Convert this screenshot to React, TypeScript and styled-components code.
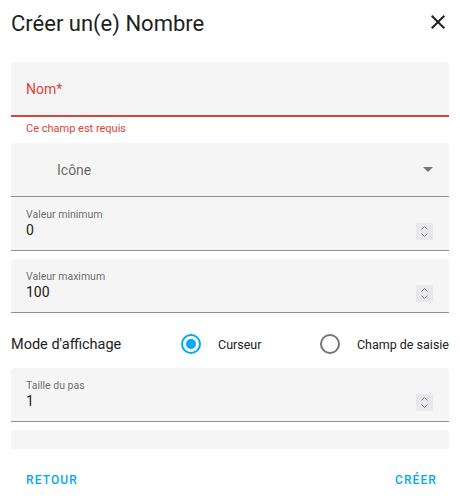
import styled, { createGlobalStyle } from 'styled-components';

const GlobalStyle = createGlobalStyle`
  body {
    margin: 0;
    background: #fff;
    font-family: Roboto, 'Noto Sans', sans-serif;
    -webkit-font-smoothing: antialiased;
  }
`;

const Dialog = styled.div`
  width: 460px;
  height: 500px;
  display: flex;
  flex-direction: column;
  background: #fff;
  overflow: hidden;
`;

const Header = styled.header`
  height: 62px;
  box-sizing: border-box;
  padding: 11px 10px 0 11px;
  display: flex;
  justify-content: space-between;
  align-items: flex-start;
  flex-shrink: 0;
`;

const Title = styled.h2`
  margin: 0;
  font-size: 22px;
  line-height: 26px;
  font-weight: 400;
  color: #212121;
`;

const CloseButton = styled.button`
  width: 24px;
  height: 24px;
  margin-top: -1px;
  padding: 0;
  border: 0;
  background: none;
  color: #212121;
  cursor: pointer;
`;

const Content = styled.div`
  flex: 1;
  overflow: hidden;
  padding: 0 11px;
  display: flex;
  flex-direction: column;
`;

const Field = styled.div<{ $error?: boolean; $gap?: number }>`
  flex-shrink: 0;
  box-sizing: border-box;
  height: ${(p) => (p.$error ? 55 : 54)}px;
  margin-bottom: ${(p) => p.$gap ?? 0}px;
  padding: 0 16px 0 15px;
  background: #f5f5f5;
  border-radius: 4px 4px 0 0;
  border-bottom: ${(p) =>
    p.$error ? '2px solid #db4437' : '1px solid rgba(0, 0, 0, 0.42)'};
  display: flex;
  align-items: center;
`;

const NumberField = styled(Field)`
  flex-direction: column;
  align-items: stretch;
`;

const ErrorLabel = styled.span`
  font-size: 14px;
  color: #db4437;
`;

const HelperText = styled.div`
  flex-shrink: 0;
  padding: 4px 15px 6px;
  font-size: 11px;
  line-height: 16px;
  color: #db4437;
`;

const SelectLabel = styled.span`
  flex: 1;
  padding-left: 31px;
  font-size: 14px;
  color: rgba(0, 0, 0, 0.6);
`;

const FloatLabel = styled.span`
  display: block;
  padding-top: 11px;
  font-size: 10.5px;
  line-height: 14px;
  color: rgba(0, 0, 0, 0.6);
`;

const ValueRow = styled.div`
  display: flex;
  align-items: center;
  justify-content: space-between;
  height: 16px;
`;

const Value = styled.span`
  font-size: 14px;
  line-height: 16px;
  color: #212121;
`;

const Spinner = styled.svg`
  display: block;
  margin-top: 3px;
`;

const RadioRow = styled.div`
  flex-shrink: 0;
  height: 55px;
  box-sizing: border-box;
  padding-top: 7px;
  display: flex;
  align-items: center;
`;

const GroupLabel = styled.span`
  width: 160px;
  font-size: 14.5px;
  color: #212121;
`;

const RadioItem = styled.label<{ $right?: boolean }>`
  display: flex;
  align-items: center;
  margin-left: ${(p) => (p.$right ? 'auto' : '0')};
  font-size: 12.5px;
  color: #212121;
`;

const RadioRing = styled.span<{ $checked?: boolean }>`
  width: 20px;
  height: 20px;
  margin: 10px 17px 10px 10px;
  box-sizing: border-box;
  border-radius: 50%;
  border: 2px solid ${(p) => (p.$checked ? '#03a9f4' : 'rgba(0, 0, 0, 0.54)')};
  display: flex;
  align-items: center;
  justify-content: center;

  &::after {
    content: '';
    display: ${(p) => (p.$checked ? 'block' : 'none')};
    width: 10px;
    height: 10px;
    border-radius: 50%;
    background: #03a9f4;
  }
`;

const Footer = styled.footer`
  height: 51px;
  flex-shrink: 0;
  box-sizing: border-box;
  padding: 13px 15px 0 18px;
  display: flex;
  justify-content: space-between;
  align-items: flex-start;
`;

const TextButton = styled.button`
  height: 36px;
  padding: 0 8px;
  border: 0;
  background: none;
  font-family: inherit;
  font-size: 12px;
  font-weight: 500;
  letter-spacing: 1.1px;
  text-transform: uppercase;
  color: #03a9f4;
  cursor: pointer;
`;

function SpinnerIcon() {
  return (
    <Spinner width="17" height="17" viewBox="0 0 17 17">
      <rect width="17" height="17" fill="#e9e9ed" />
      <path d="M5.5 6.5 L8.5 3.5 L11.5 6.5" fill="none" stroke="#8a8a8a" strokeWidth="1" />
      <path d="M5.5 10.5 L8.5 13.5 L11.5 10.5" fill="none" stroke="#8a8a8a" strokeWidth="1" />
    </Spinner>
  );
}

function NumberInput({ label, value, gap }: { label: string; value: string; gap?: number }) {
  return (
    <NumberField $gap={gap}>
      <FloatLabel>{label}</FloatLabel>
      <ValueRow>
        <Value>{value}</Value>
        <SpinnerIcon />
      </ValueRow>
    </NumberField>
  );
}

export default function App() {
  return (
    <Dialog>
      <GlobalStyle />
      <Header>
        <Title>Créer un(e) Nombre</Title>
        <CloseButton aria-label="Fermer">
          <svg width="24" height="24" viewBox="0 0 24 24">
            <path
              fill="currentColor"
              d="M19 6.41L17.59 5 12 10.59 6.41 5 5 6.41 10.59 12 5 17.59 6.41 19 12 13.41 17.59 19 19 17.59 13.41 12z"
            />
          </svg>
        </CloseButton>
      </Header>
      <Content>
        <Field $error>
          <ErrorLabel>Nom*</ErrorLabel>
        </Field>
        <HelperText>Ce champ est requis</HelperText>
        <Field>
          <SelectLabel>Icône</SelectLabel>
          <svg width="10" height="5" viewBox="0 0 10 5">
            <path d="M0 0 L10 0 L5 5 Z" fill="#757575" />
          </svg>
        </Field>
        <NumberInput label="Valeur minimum" value="0" gap={8} />
        <NumberInput label="Valeur maximum" value="100" />
        <RadioRow>
          <GroupLabel>Mode d'affichage</GroupLabel>
          <RadioItem>
            <RadioRing $checked />
            Curseur
          </RadioItem>
          <RadioItem $right>
            <RadioRing />
            Champ de saisie
          </RadioItem>
        </RadioRow>
        <NumberInput label="Taille du pas" value="1" gap={8} />
        <Field />
      </Content>
      <Footer>
        <TextButton>Retour</TextButton>
        <TextButton>Créer</TextButton>
      </Footer>
    </Dialog>
  );
}
